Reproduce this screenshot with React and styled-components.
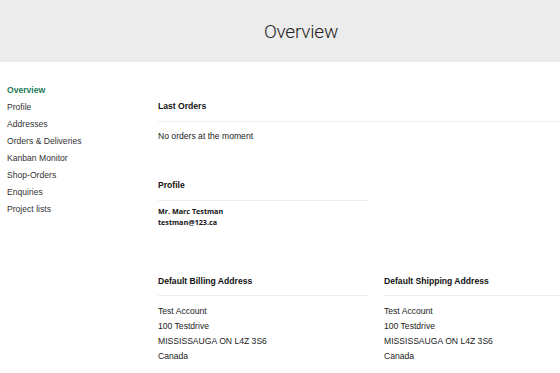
import React from "react";
import styled, { createGlobalStyle } from "styled-components";

const GlobalStyle = createGlobalStyle`
  html, body {
    margin: 0;
    padding: 0;
    background: #fff;
    overflow: hidden;
  }
  body {
    font-family: "Liberation Sans", Arial, sans-serif;
    color: #222;
  }
`;

const Header = styled.header`
  height: 62px;
  background: #ececec;
  display: flex;
  align-items: center;
  justify-content: center;
  padding-left: 42px;
`;

const Title = styled.h1`
  margin: 0;
  font-family: Roboto, "Liberation Sans", sans-serif;
  font-weight: 300;
  font-size: 19px;
  color: #222;
  letter-spacing: -0.2px;
`;

const Layout = styled.div`
  display: grid;
  grid-template-columns: 158px 1fr;
`;

const Sidebar = styled.nav`
  display: flex;
  flex-direction: column;
  padding: 20px 0 0 7px;
`;

const NavItem = styled.a`
  font-size: 8.6px;
  line-height: 17px;
  color: ${(p) => (p.$active ? "#1d7a58" : "#333")};
  font-weight: ${(p) => (p.$active ? "bold" : "normal")};
  text-decoration: none;
`;

const Main = styled.main`
  display: grid;
  grid-template-columns: 210px 1fr;
  column-gap: 16px;
  padding-top: 38px;
`;

const Section = styled.section`
  grid-column: ${(p) => (p.$wide ? "1 / -1" : "auto")};
  margin-top: ${(p) => p.$top || 0}px;
`;

const SectionTitle = styled.h2`
  margin: 0;
  font-size: 8.6px;
  line-height: 12px;
  font-weight: bold;
  color: #111;
  padding-bottom: ${(p) => p.$pad || 9}px;
  border-bottom: 1px solid #eeeeee;
`;

const Text = styled.p`
  margin: 8px 0 0;
  font-size: 8.6px;
  line-height: 12px;
  color: #222;
`;

const ProfileInfo = styled.div`
  margin-top: 5px;
  font-family: "Open Sans", "Noto Sans", sans-serif;
  font-weight: 700;
  font-size: 7.2px;
  line-height: 11px;
  color: #111;
`;

const Address = styled.div`
  margin-top: 8px;
  display: flex;
  flex-direction: column;
`;

const AddressLine = styled.span`
  font-size: 8.6px;
  line-height: 15px;
  color: #222;
`;

const navItems = [
  "Overview",
  "Profile",
  "Addresses",
  "Orders & Deliveries",
  "Kanban Monitor",
  "Shop-Orders",
  "Enquiries",
  "Project lists",
];

const address = ["Test Account", "100 Testdrive", "MISSISSAUGA ON L4Z 3S6", "Canada"];

const AddressBlock = ({ title }) => (
  <Section $top={47}>
    <SectionTitle $pad={8}>{title}</SectionTitle>
    <Address>
      {address.map((line) => (
        <AddressLine key={line}>{line}</AddressLine>
      ))}
    </Address>
  </Section>
);

const App = () => {
  return (
    <>
      <GlobalStyle />
      <Header>
        <Title>Overview</Title>
      </Header>
      <Layout>
        <Sidebar>
          {navItems.map((item, i) => (
            <NavItem key={item} $active={i === 0}>
              {item}
            </NavItem>
          ))}
        </Sidebar>
        <Main>
          <Section $wide>
            <SectionTitle>Last Orders</SectionTitle>
            <Text>No orders at the moment</Text>
          </Section>
          <Section $top={37}>
            <SectionTitle>Profile</SectionTitle>
            <ProfileInfo>
              <div>Mr. Marc Testman</div>
              <div>testman@123.ca</div>
            </ProfileInfo>
          </Section>
          <div />
          <AddressBlock title="Default Billing Address" />
          <AddressBlock title="Default Shipping Address" />
        </Main>
      </Layout>
    </>
  );
};

export default App;
